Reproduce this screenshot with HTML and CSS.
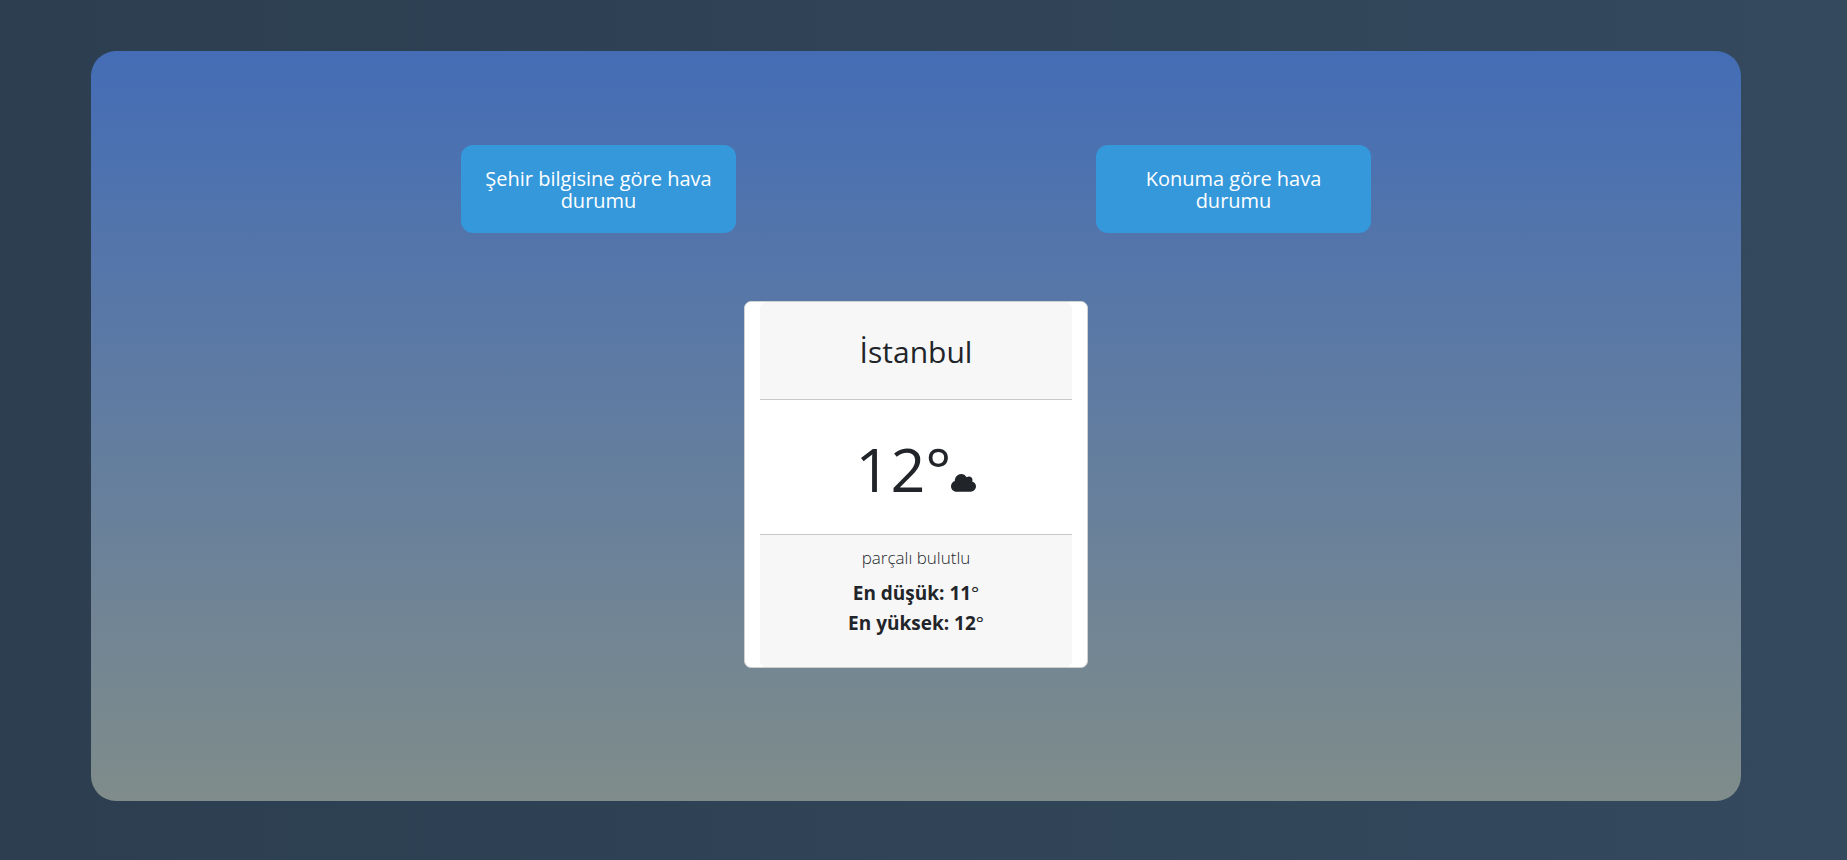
FILE: index.html
```html
<!DOCTYPE html>
<html lang="tr">
<head>
  <meta charset="utf-8">
  <meta name="viewport" content="width=device-width, initial-scale=1">
  <title>Hava Durumu</title>
  <link rel="stylesheet" href="styles.css">
</head>
<body>
  <main class="panel">
    <nav class="actions">
      <button class="action" type="button">Şehir bilgisine göre hava durumu</button>
      <button class="action" type="button">Konuma göre hava durumu</button>
    </nav>
    <section class="card">
      <header class="card-header">
        <h1 class="city">İstanbul</h1>
      </header>
      <div class="card-body">
        <span class="temperature">12°</span>
        <svg class="cloud" viewBox="0 0 25 18" aria-hidden="true">
          <path d="M5.500 17.700C2.500 17.700 0 15.200 0 12.200C0 9.800 1.600 7.800 3.800 7C3.800 3.100 6.700 0 10.200 0C12.500 0 14.500 1.200 15.600 3.300C16.400 2.800 17.200 2.600 18 2.600C20 2.600 21.500 4.100 21.500 6C21.500 6.500 21.400 7 21.200 7.500C23.400 8.100 25 10 25 12.300C25 15.300 22.600 17.700 19.600 17.700Z"/>
        </svg>
      </div>
      <footer class="card-footer">
        <p class="description">parçalı bulutlu</p>
        <p class="range">En düşük: 11<span class="degree">°</span></p>
        <p class="range">En yüksek: 12<span class="degree">°</span></p>
      </footer>
    </section>
  </main>
</body>
</html>
```
FILE: styles.css
```css
* {
  box-sizing: border-box;
}

body {
  display: flex;
  align-items: center;
  justify-content: center;
  min-height: 100vh;
  margin: 0;
  padding: 51px 106px 59px 91px;
  background: linear-gradient(to right, #2c3e50, #34495e);
  color: #212529;
  font-family: "Segoe UI", "Open Sans", "Noto Sans", sans-serif;
}

.panel {
  display: flex;
  flex-direction: column;
  align-items: center;
  gap: 68px;
  width: 100%;
  min-height: 750px;
  padding: 94px 24px 48px;
  border-radius: 25px;
  background: linear-gradient(#446db6, #7f8c8a);
}

.actions {
  display: flex;
  flex-wrap: wrap;
  justify-content: center;
  gap: 24px 360px;
}

.action {
  width: 275px;
  min-height: 88px;
  padding: 22px 20px 20px;
  border: 0;
  border-radius: 12px;
  background: #3498db;
  color: #fff;
  font: 500 20px/22px "Segoe UI", "Open Sans", "Noto Sans", sans-serif;
  cursor: pointer;
}

.card {
  width: 344px;
  max-width: 100%;
  padding: 0 15px;
  border: 1px solid #cfd0d1;
  border-radius: 7px;
  background: #fff;
  text-align: center;
}

.card-header {
  padding: 26px 16px 24px;
  border-bottom: 1px solid #c8c8c8;
  border-radius: 6px 6px 0 0;
  background: #f7f7f7;
}

.city {
  margin: 0;
  font-size: 30px;
  font-weight: 400;
  line-height: 47px;
}

.card-body {
  display: flex;
  align-items: baseline;
  justify-content: center;
  padding: 21px 16px 17px;
}

.temperature {
  font-size: 61px;
  line-height: 96px;
}

.cloud {
  width: 25px;
  height: 18px;
  fill: #212529;
}

.card-footer {
  padding: 8px 16px 29px;
  border-top: 1px solid #c8c8c8;
  border-radius: 0 0 6px 6px;
  background: #f7f7f7;
}

.description {
  margin: 0 0 5px;
  font-size: 17px;
  font-weight: 300;
  line-height: 30px;
}

.range {
  margin: 0;
  font-size: 19px;
  font-weight: 700;
  line-height: 30px;
}

.degree {
  font-weight: 400;
}
```
